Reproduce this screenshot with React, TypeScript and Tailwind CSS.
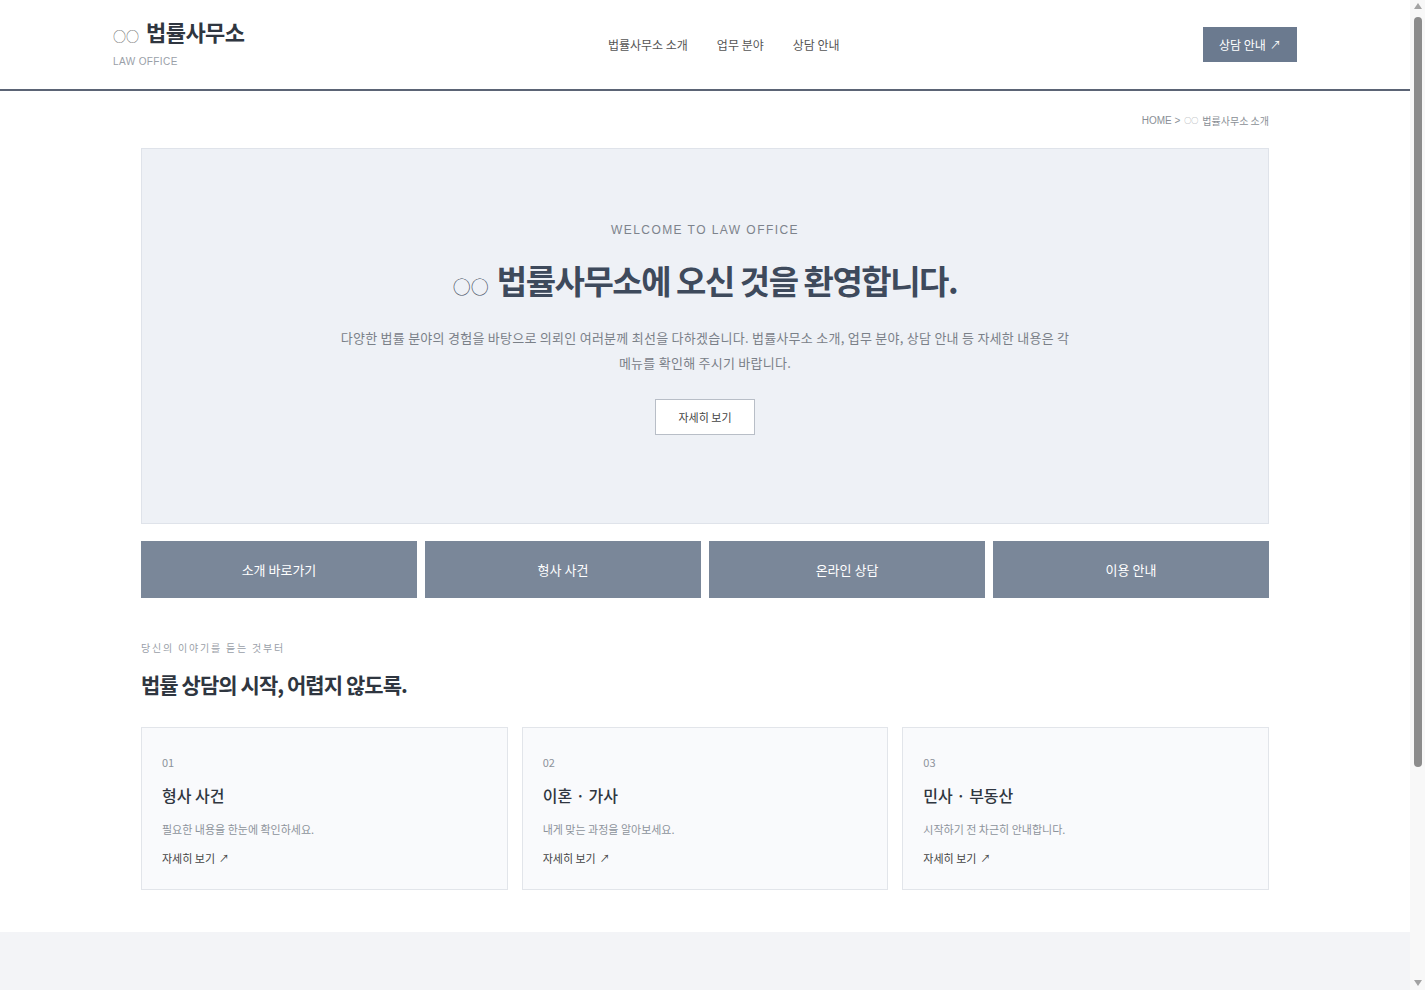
import React from "react";

const font = {
  fontFamily: '"Noto Sans CJK KR", "Liberation Sans", sans-serif',
};

const quickLinks = ["소개 바로가기", "형사 사건", "온라인 상담", "이용 안내"];

const cards = [
  { no: "01", title: "형사 사건", desc: "필요한 내용을 한눈에 확인하세요." },
  { no: "02", title: "이혼 · 가사", desc: "내게 맞는 과정을 알아보세요." },
  { no: "03", title: "민사 · 부동산", desc: "시작하기 전 차근히 안내합니다." },
];

// browser scrollbar seen on the right edge of the page
function ScrollBar() {
  return (
    <div className="fixed right-0 top-0 flex h-screen w-[15px] flex-col items-center bg-[#f8f8f8]">
      <svg width="8" height="6" viewBox="0 0 8 6" className="mt-[3px]">
        <path d="M4 0 L8 6 L0 6 Z" fill="#a3a3a3" />
      </svg>
      <div className="mt-[8px] h-[750px] w-[8px] rounded-full bg-[#8c8c8c]" />
      <div className="flex-1" />
      <svg width="8" height="6" viewBox="0 0 8 6" className="mb-[4px]">
        <path d="M0 0 L8 0 L4 6 Z" fill="#a3a3a3" />
      </svg>
    </div>
  );
}

export default function App() {
  return (
    <div className="bg-white text-[#333]" style={font}>
      <div className="min-h-[1400px] w-[1410px]">
        {/* Header */}
        <header className="border-b-2 border-[#5b6475] bg-white">
          <div className="mx-auto flex h-[89px] max-w-[1184px] items-center justify-between">
            <div className="flex flex-col">
              <div className="flex items-baseline gap-[7px] leading-none">
                <span className="text-[13px] font-light text-[#555]">○○</span>
                <span className="text-[22px] font-bold tracking-tight text-[#2f3640]">
                  법률사무소
                </span>
              </div>
              <span
                className="mt-[12px] text-[10px] tracking-[0.04em] text-[#9aa0a8]"
                style={{ fontFamily: '"Liberation Sans", sans-serif' }}
              >
                LAW OFFICE
              </span>
            </div>
            <nav className="flex items-center gap-[29px] text-[12px] text-[#555]">
              <a>법률사무소 소개</a>
              <a>업무 분야</a>
              <a>상담 안내</a>
            </nav>
            <button className="flex h-[35px] w-[94px] items-center justify-center gap-1 bg-[#6b7a8f] text-[12px] text-white">
              상담 안내 <span className="text-[11px]">↗</span>
            </button>
          </div>
        </header>

        <main className="mx-auto max-w-[1128px]">
          {/* Breadcrumb */}
          <div className="flex h-[57px] items-center justify-end pt-[2px] text-[10px] text-[#8a8f96]">
            <span style={{ fontFamily: '"Liberation Sans", sans-serif' }}>HOME &gt;</span>
            <span className="ml-1 text-[7px]">○○</span>
            <span className="ml-1">법률사무소 소개</span>
          </div>

          {/* Hero */}
          <section className="flex h-[376px] flex-col items-center border border-[#dfe3ea] bg-[#eef1f6] pt-[72px] text-center">
            <p
              className="text-[12px] tracking-[0.12em] text-[#7d838c]"
              style={{ fontFamily: '"Liberation Sans", sans-serif' }}
            >
              WELCOME TO LAW OFFICE
            </p>
            <h1 className="mt-[21px] flex items-baseline gap-2 text-[33px] font-bold leading-tight tracking-[-0.045em] text-[#3e4a5c]">
              <span className="text-[18px] font-light tracking-normal">○○</span>
              법률사무소에 오신 것을 환영합니다.
            </h1>
            <p className="mt-[24px] max-w-[734px] text-[13px] leading-[25px] tracking-[0.02em] text-[#7a8088]">
              다양한 법률 분야의 경험을 바탕으로 의뢰인 여러분께 최선을 다하겠습니다. 법률사무소 소개, 업무 분야, 상담 안내 등 자세한 내용은 각
              메뉴를 확인해 주시기 바랍니다.
            </p>
            <button className="mt-[24px] h-[36px] w-[100px] border border-[#b8bec7] bg-white text-[11px] text-[#444]">
              자세히 보기
            </button>
          </section>

          {/* Quick links */}
          <div className="mt-[17px] grid grid-cols-4 gap-2">
            {quickLinks.map((q) => (
              <a
                key={q}
                className="flex h-[57px] items-center justify-center bg-[#7a8799] text-[13px] text-white"
              >
                {q}
              </a>
            ))}
          </div>

          {/* Intro */}
          <section className="pt-[42px]">
            <p className="text-[10px] tracking-[0.18em] text-[#9aa0a8]">당신의 이야기를 듣는 것부터</p>
            <h2 className="mt-[14px] text-[21px] font-bold tracking-[-0.045em] text-[#2f3640]">
              법률 상담의 시작, 어렵지 않도록.
            </h2>

            <div className="mt-[26px] grid grid-cols-3 gap-[14px]">
              {cards.map((c) => (
                <div
                  key={c.no}
                  className="h-[163px] border border-[#e2e5ea] bg-[#f9fafc] px-5 pt-[26px]"
                >
                  <p className="text-[11px] text-[#8d939b]">{c.no}</p>
                  <h3 className="mt-[13px] text-[16px] font-medium text-[#2f3640]">{c.title}</h3>
                  <p className="mt-[14px] text-[11px] text-[#8d939b]">{c.desc}</p>
                  <a className="mt-[12px] flex items-center gap-1 text-[11px] text-[#444]">
                    자세히 보기 <span className="text-[10px]">↗</span>
                  </a>
                </div>
              ))}
            </div>
          </section>
        </main>

        {/* Bottom band */}
        <section className="mt-[42px] h-[420px] bg-[#f3f4f7]" />
      </div>
      <ScrollBar />
    </div>
  );
}
